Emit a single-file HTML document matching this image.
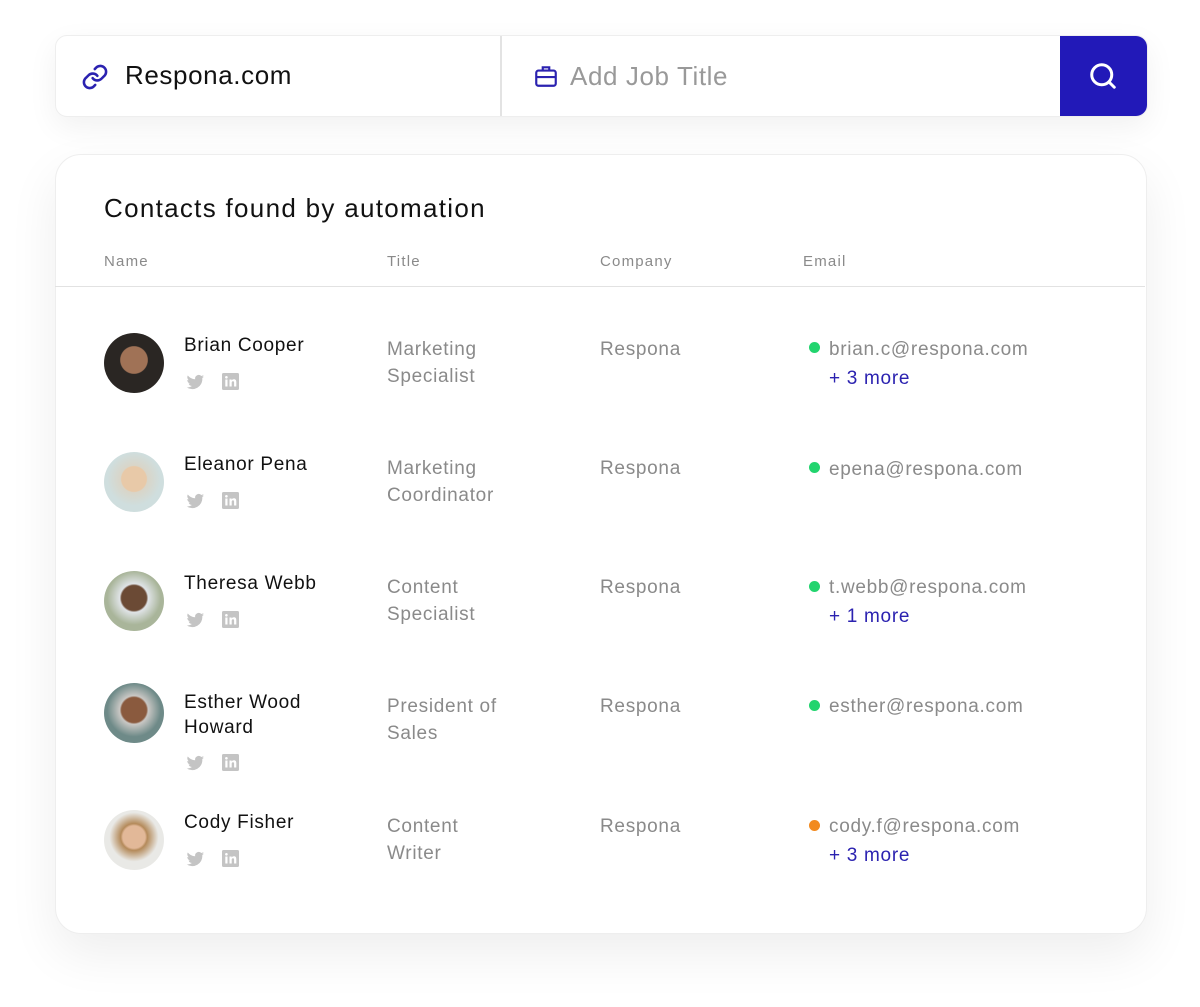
<!DOCTYPE html>
<html><head><style>
body{margin:0;width:1200px;height:1007px;background:#fff;font-family:"Liberation Sans",sans-serif;position:relative;overflow:hidden}
.a{position:absolute}
.bar{left:55px;top:35px;width:1091px;height:80px;border:1px solid #eee;border-radius:12px;box-shadow:0 10px 30px rgba(0,0,0,.06);background:#fff;overflow:hidden}
.card{left:55px;top:154px;width:1090px;height:778px;border:1px solid #eee;border-radius:26px;box-shadow:0 20px 50px rgba(0,0,0,.07);background:#fff}
.h{font-size:15px;color:#8a8a8a;top:253px;letter-spacing:1.2px}
.nm{font-size:19px;color:#111;line-height:25px;letter-spacing:.7px}
.t{font-size:19px;color:#8a8a8a;line-height:27px;letter-spacing:.7px}
.m{font-size:19px;color:#2b22b0;letter-spacing:.7px}
.dot{width:11px;height:11px;border-radius:50%;background:#22d46e}
.av{width:60px;height:60px;border-radius:50%;left:104px}
</style></head><body>
<div class="a bar">
 <svg class="a" style="left:25px;top:27px" width="28" height="28" viewBox="0 0 24 24" fill="none" stroke="#2b22b0" stroke-width="2.2" stroke-linecap="round"><path d="M10 13a5 5 0 0 0 7.5.5l3-3a5 5 0 0 0-7-7l-1.7 1.7"/><path d="M14 11a5 5 0 0 0-7.5-.5l-3 3a5 5 0 0 0 7 7l1.7-1.7"/></svg>
 <div class="a" style="left:69px;top:24px;font-size:26px;color:#111;letter-spacing:.6px">Respona.com</div>
 <div class="a" style="left:444px;top:0;width:2px;height:80px;background:#e3e3e3"></div>
 <svg class="a" style="left:477px;top:27px" width="26" height="26" viewBox="0 0 24 24" fill="none" stroke="#2b22b0" stroke-width="2"><rect x="3" y="7" width="18" height="14" rx="2"/><path d="M9 7V4h6v3M3 13h18"/></svg>
 <div class="a" style="left:514px;top:25px;font-size:26px;color:#999;letter-spacing:.6px">Add Job Title</div>
 <div class="a" style="left:1004px;top:-1px;width:88px;height:82px;background:#2219b8"></div>
 <svg class="a" style="left:1032px;top:25px" width="30" height="30" viewBox="0 0 24 24" fill="none" stroke="#fff" stroke-width="2.4" stroke-linecap="round"><circle cx="11" cy="11" r="8"/><path d="M17 17l4 4"/></svg>
</div>
<div class="a card"></div>
<div class="a" style="left:104px;top:193px;font-size:26px;color:#111;letter-spacing:1.3px">Contacts found by automation</div>
<div class="a h" style="left:104px">Name</div><div class="a h" style="left:387px">Title</div><div class="a h" style="left:600px">Company</div><div class="a h" style="left:803px">Email</div>
<div class="a" style="left:55px;top:286px;width:1090px;height:1px;background:#e2e2e2"></div>

<div class="a av" style="top:333px;background:radial-gradient(circle at 50% 45%,#a07256 0 30%,#2a2623 32%)"></div>
<div class="a nm" style="left:184px;top:333px">Brian Cooper</div>
<div class="a t" style="left:387px;top:336px">Marketing<br>Specialist</div>
<div class="a t" style="left:600px;top:336px">Respona</div>
<div class="a dot" style="left:809px;top:342px"></div>
<div class="a t" style="left:829px;top:336px">brian.c@respona.com</div>
<div class="a m" style="left:829px;top:368px">+ 3 more</div>

<div class="a av" style="top:452px;background:radial-gradient(circle at 50% 45%,#e8c9a8 0 28%,#d9d5c8 30%,#cfdede 60%)"></div>
<div class="a nm" style="left:184px;top:452px">Eleanor Pena</div>
<div class="a t" style="left:387px;top:455px">Marketing<br>Coordinator</div>
<div class="a t" style="left:600px;top:455px">Respona</div>
<div class="a dot" style="left:809px;top:462px"></div>
<div class="a t" style="left:829px;top:456px">epena@respona.com</div>

<div class="a av" style="top:571px;background:radial-gradient(circle at 50% 45%,#6b4a35 0 28%,#dfe3e6 32%,#a9b59a 60%)"></div>
<div class="a nm" style="left:184px;top:571px">Theresa Webb</div>
<div class="a t" style="left:387px;top:574px">Content<br>Specialist</div>
<div class="a t" style="left:600px;top:574px">Respona</div>
<div class="a dot" style="left:809px;top:581px"></div>
<div class="a t" style="left:829px;top:574px">t.webb@respona.com</div>
<div class="a m" style="left:829px;top:606px">+ 1 more</div>

<div class="a av" style="top:683px;background:radial-gradient(circle at 50% 45%,#8a5a3e 0 28%,#c9c7c4 32%,#6e8a88 60%)"></div>
<div class="a nm" style="left:184px;top:690px">Esther Wood<br>Howard</div>
<div class="a t" style="left:387px;top:693px">President of<br>Sales</div>
<div class="a t" style="left:600px;top:693px">Respona</div>
<div class="a dot" style="left:809px;top:700px"></div>
<div class="a t" style="left:829px;top:693px">esther@respona.com</div>

<div class="a av" style="top:810px;background:radial-gradient(circle at 50% 45%,#e2b898 0 25%,#b48a5a 30%,#e9e9e6 55%)"></div>
<div class="a nm" style="left:184px;top:810px">Cody Fisher</div>
<div class="a t" style="left:387px;top:813px">Content<br>Writer</div>
<div class="a t" style="left:600px;top:813px">Respona</div>
<div class="a dot" style="left:809px;top:820px;background:#f28a1e"></div>
<div class="a t" style="left:829px;top:813px">cody.f@respona.com</div>
<div class="a m" style="left:829px;top:845px">+ 3 more</div>

<svg width="0" height="0" style="position:absolute"><defs>
<g id="tw"><path fill="#c4c4c4" d="M18 4.5a7 7 0 0 1-2 .6 3.6 3.6 0 0 0 1.6-2 7 7 0 0 1-2.3.9 3.6 3.6 0 0 0-6.1 3.3A10 10 0 0 1 1.8 3.5a3.6 3.6 0 0 0 1.1 4.8 3.5 3.5 0 0 1-1.6-.4 3.6 3.6 0 0 0 2.9 3.5 3.6 3.6 0 0 1-1.6.1 3.6 3.6 0 0 0 3.3 2.5A7.2 7.2 0 0 1 .8 15.5a10 10 0 0 0 15.5-9V6A7 7 0 0 0 18 4.5z"/></g>
<g id="li"><rect width="17" height="17" rx="1.5" fill="#c4c4c4"/><rect x="3.3" y="6.5" width="2.2" height="7" fill="#fff"/><circle cx="4.4" cy="4.3" r="1.3" fill="#fff"/><path d="M7.5 6.5h2.1v1c.4-.7 1.2-1.2 2.3-1.2 2 0 2.4 1.3 2.4 3v4.2h-2.2V9.8c0-.8-.1-1.6-1.1-1.6s-1.3.7-1.3 1.6v3.7H7.5z" fill="#fff"/></g>
</defs></svg>
<svg class="a" style="left:186px;top:372px" width="18" height="18"><use href="#tw"/></svg><svg class="a" style="left:222px;top:373px" width="17" height="17"><use href="#li"/></svg>
<svg class="a" style="left:186px;top:491px" width="18" height="18"><use href="#tw"/></svg><svg class="a" style="left:222px;top:492px" width="17" height="17"><use href="#li"/></svg>
<svg class="a" style="left:186px;top:610px" width="18" height="18"><use href="#tw"/></svg><svg class="a" style="left:222px;top:611px" width="17" height="17"><use href="#li"/></svg>
<svg class="a" style="left:186px;top:753px" width="18" height="18"><use href="#tw"/></svg><svg class="a" style="left:222px;top:754px" width="17" height="17"><use href="#li"/></svg>
<svg class="a" style="left:186px;top:849px" width="18" height="18"><use href="#tw"/></svg><svg class="a" style="left:222px;top:850px" width="17" height="17"><use href="#li"/></svg>
</body></html>
